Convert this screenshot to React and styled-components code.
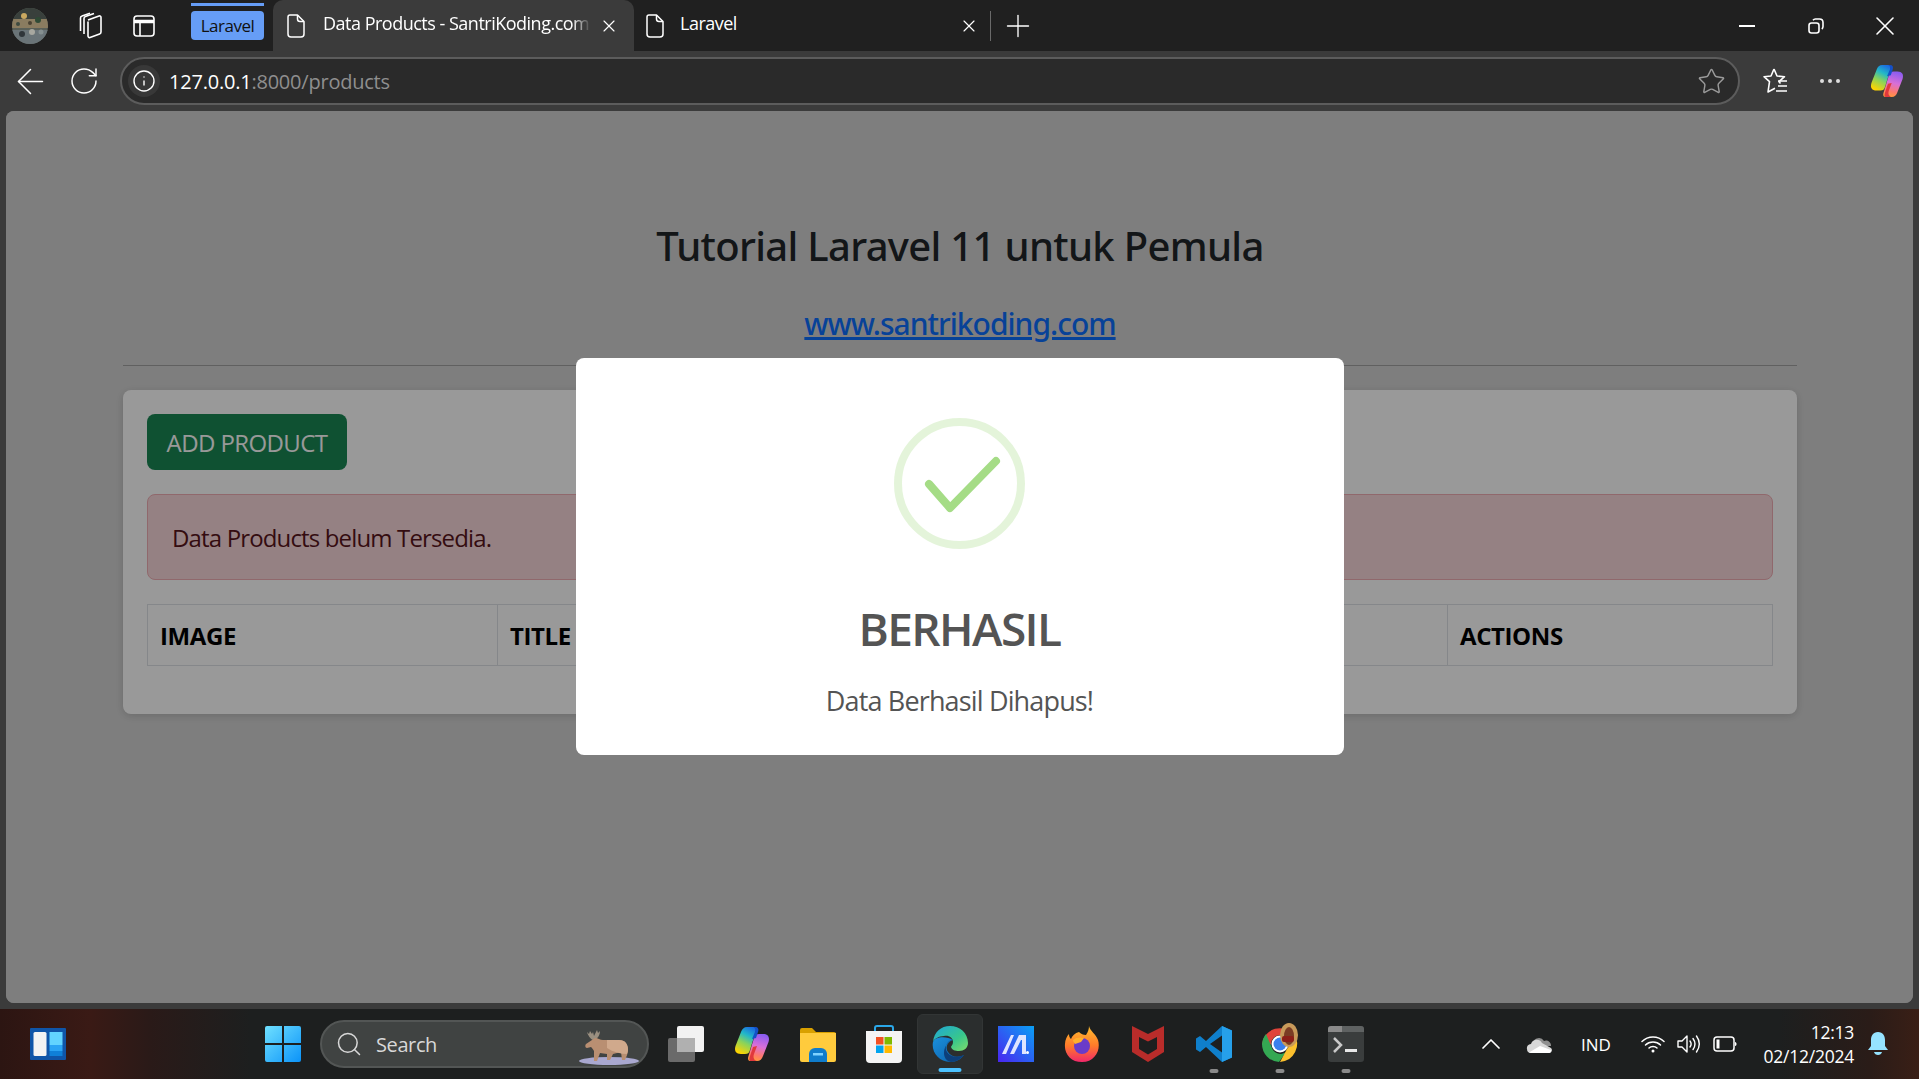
import React from 'react'
import styled, { createGlobalStyle } from 'styled-components'
import { ArrowLeft, RotateCw, Info, Star, X, Plus, ChevronUp, Search } from 'lucide-react'

const Global = createGlobalStyle`
  html, body { margin: 0; padding: 0; height: 100%; overflow: hidden; background: #202020; }
  * { box-sizing: border-box; }
  body { font-family: "Open Sans", "Noto Sans", sans-serif; }
`

const Screen = styled.div`
  width: 1919px;
  height: 1079px;
  display: flex;
  flex-direction: column;
`

const TitleBar = styled.div`
  height: 51px;
  background: #202020;
  display: flex;
  align-items: center;
  padding-left: 12px;
  color: #fff;
`

const Cell = styled.div`
  width: ${p => p.$w || 54}px;
  margin-left: ${p => p.$ml || 0}px;
  display: flex;
  align-items: center;
  justify-content: center;
  flex-shrink: 0;
  color: ${p => p.$color || '#fff'};
`

const GroupChip = styled.div`
  position: relative;
  width: 73px;
  height: 29px;
  margin-left: 20px;
  background: #669df6;
  border-radius: 4px;
  color: #111;
  font-size: 17px;
  letter-spacing: -0.5px;
  display: flex;
  align-items: center;
  justify-content: center;
  &::before {
    content: '';
    position: absolute;
    left: 0;
    right: 0;
    top: -8px;
    height: 3px;
    background: #669df6;
  }
`

const Tab = styled.div`
  align-self: stretch;
  width: ${p => p.$w}px;
  margin-left: ${p => p.$ml || 0}px;
  background: ${p => (p.$active ? '#3b3b3b' : 'transparent')};
  border-radius: 10px 10px 0 0;
  display: flex;
  align-items: center;
  padding-left: ${p => p.$pl}px;
`

const TabTitle = styled.div`
  margin-left: ${p => p.$ml}px;
  width: ${p => p.$w}px;
  font-size: 18px;
  letter-spacing: -0.5px;
  white-space: nowrap;
  overflow: hidden;
  margin-top: -5px;
  mask-image: ${p => (p.$fade ? 'linear-gradient(90deg, #000 93%, transparent)' : 'none')};
`

const TabClose = styled(Cell)`
  width: 20px;
  margin-left: ${p => p.$ml}px;
`

const Divider = styled.div`
  width: 1px;
  height: 30px;
  background: #6a6a6a;
  margin-left: 9px;
`

const WindowControls = styled.div`
  margin-left: auto;
  display: flex;
`

const Toolbar = styled.div`
  height: 60px;
  background: #3b3b3b;
  display: flex;
  align-items: center;
  padding-left: 3px;
  padding-right: 5px;
`

const AddressBar = styled.div`
  width: 1620px;
  height: 48px;
  margin-left: 9px;
  margin-right: 9px;
  background: #2a2a2a;
  border: 2px solid #5c5c5c;
  border-radius: 24px;
  display: flex;
  align-items: center;
  padding-left: 6px;
  font-size: 20px;
`

const InfoBadge = styled.div`
  width: 32px;
  height: 32px;
  border-radius: 50%;
  background: #383838;
  color: #fff;
  display: flex;
  align-items: center;
  justify-content: center;
`

const Url = styled.div`
  margin-left: 9px;
  color: #8f8f8f;
  letter-spacing: -0.22px;
  strong { color: #fff; font-weight: 400; }
`

const StarSlot = styled.div`
  margin-left: auto;
  margin-right: 12px;
  color: #9a9a9a;
  display: flex;
`

const Chrome = styled.div`
  flex: 1;
  background: #3b3b3b;
  padding: 0 6px 6px;
  display: flex;
  min-height: 0;
`

const Viewport = styled.div`
  position: relative;
  flex: 1;
  background: lightgray;
  border-radius: 8px;
  overflow: hidden;
  padding: 111px 116px 0 117px;
  color: #212529;
`

const Heading = styled.h3`
  margin: 0;
  text-align: center;
  font-family: "Noto Sans", "Open Sans", sans-serif;
  font-size: 40px;
  line-height: 48px;
  font-weight: 500;
  letter-spacing: -0.68px;
`

const SiteLink = styled.a`
  display: block;
  margin-top: 35px;
  text-align: center;
  font-family: "Noto Sans", "Open Sans", sans-serif;
  font-size: 30px;
  line-height: 38px;
  font-weight: 500;
  letter-spacing: -1px;
  color: #0d6efd;
  text-decoration: underline;
`

const Rule = styled.hr`
  margin: 22px 0 24px;
  border: 0;
  border-top: 1px solid #a0a0a0;
`

const Card = styled.div`
  background: #fff;
  border-radius: 8px;
  padding: 24px;
  box-shadow: 0 2px 8px rgba(0, 0, 0, 0.15);
`

const AddButton = styled.button`
  display: block;
  width: 200px;
  height: 56px;
  background: #198754;
  color: #fff;
  border: 0;
  border-radius: 8px;
  font-family: inherit;
  font-size: 24px;
  letter-spacing: -0.6px;
  padding: 1px 0 0;
`

const Alert = styled.div`
  margin-top: 24px;
  height: 86px;
  background: #f8d7da;
  border: 1px solid #f1aeb5;
  border-radius: 8px;
  color: #58151c;
  font-size: 24px;
  letter-spacing: -0.85px;
  display: flex;
  align-items: center;
  padding: 0 24px 0;
`

const HeaderRow = styled.div`
  margin-top: 24px;
  margin-bottom: 24px;
  display: grid;
  grid-template-columns: 349px 950px 1fr;
  border: 1px solid #dee2e6;
  height: 62px;
`

const HeaderCell = styled.div`
  display: flex;
  align-items: center;
  padding-left: 12px;
  font-size: 24px;
  font-weight: 700;
  letter-spacing: -0.4px;
  color: #000;
  & + & { border-left: 1px solid #dee2e6; }
`

const Backdrop = styled.div`
  position: absolute;
  inset: 0;
  padding-bottom: 1px;
  background: rgba(0, 0, 0, 0.4);
  display: flex;
  align-items: center;
  justify-content: center;
`

const Modal = styled.div`
  width: 768px;
  height: 397px;
  background: #fff;
  border-radius: 8px;
  display: flex;
  flex-direction: column;
  align-items: center;
  padding-top: 60px;
  color: #545454;
`

const ModalTitle = styled.h2`
  margin: 51px 0 0;
  font-size: 46px;
  line-height: 56px;
  font-weight: 600;
  letter-spacing: -1.6px;
`

const ModalText = styled.div`
  margin-top: 28px;
  font-size: 27px;
  line-height: 34px;
  letter-spacing: -0.85px;
`

const Taskbar = styled.div`
  height: 70px;
  display: flex;
  align-items: center;
  color: #fff;
  background: linear-gradient(90deg, #2c1512 0, #3a1a15 90px, #2a1a18 150px, #1d1f1f 250px, #1d1f1f 1780px, #2a1c18 1870px, #3a1f16 1919px);
`

const Widgets = styled(Cell)`
  width: 66px;
  margin-left: 15px;
`

const StartCell = styled(Cell)`
  width: 66px;
  margin-left: 169px;
`

const SearchBox = styled.div`
  position: relative;
  width: 329px;
  height: 48px;
  margin-left: 4px;
  margin-right: 4px;
  border-radius: 24px;
  background: #404342;
  border: 2px solid #535655;
  display: flex;
  align-items: center;
  padding-left: 13px;
  font-size: 20px;
  color: #d8d8d8;
  letter-spacing: -0.4px;
  flex-shrink: 0;
  span { margin-left: 13px; }
`

const MooseSlot = styled.div`
  position: absolute;
  right: 8px;
  top: 4px;
`

const AppCell = styled.div`
  position: relative;
  width: 66px;
  height: 60px;
  flex-shrink: 0;
  display: flex;
  align-items: center;
  justify-content: center;
  border-radius: 6px;
  background: ${p => (p.$active ? '#2b2e2e' : 'transparent')};
  border: ${p => (p.$active ? '1px solid #323535' : 'none')};
  &::after {
    content: '';
    display: ${p => (p.$open || p.$active ? 'block' : 'none')};
    position: absolute;
    bottom: 1px;
    left: 50%;
    transform: translateX(-50%);
    width: ${p => (p.$active ? 23 : 9)}px;
    height: 4px;
    border-radius: 2px;
    background: ${p => (p.$active ? '#4cc2ff' : '#8a8a8a')};
  }
`

const Tray = styled.div`
  margin-left: auto;
  padding-right: 17px;
  display: flex;
  align-items: center;
  height: 100%;
`

const TraySlot = styled.div`
  width: ${p => p.$w}px;
  display: flex;
  justify-content: center;
  align-items: center;
  font-size: 17px;
`

const Clock = styled.div`
  width: 96px;
  text-align: right;
  font-size: 17.5px;
  line-height: 24px;
  letter-spacing: -0.25px;
  margin-left: 15px;
`

const ThinX = () => <X size={24} strokeWidth={1.4} />

const DocIcon = () => (
  <svg width="18" height="24" viewBox="0 0 18 24" fill="none" stroke="#fff" strokeWidth="1.5" strokeLinejoin="round">
    <path d="M3 1h7.5L17 7.5V20a3 3 0 0 1-3 3H4a3 3 0 0 1-3-3V3a2 2 0 0 1 2-2z" />
    <path d="M10.5 1v4a2.5 2.5 0 0 0 2.5 2.5h4" />
  </svg>
)

const Avatar = () => (
  <svg width="36" height="36" viewBox="0 0 36 36">
    <circle cx="18" cy="18" r="18" fill="#5a6058" />
    <clipPath id="avatarClip"><circle cx="18" cy="18" r="18" /></clipPath>
    <g clipPath="url(#avatarClip)">
      <rect x="0" y="0" width="36" height="11" fill="#39403c" />
      <rect x="0" y="11" width="36" height="9" fill="#8a7c60" />
      <rect x="0" y="22" width="36" height="14" fill="#6a7478" />
      <circle cx="12" cy="8" r="3" fill="#c9a860" />
      <circle cx="26" cy="12" r="3" fill="#2f4a35" />
      <circle cx="20" cy="24" r="3" fill="#a8a8a0" />
      <circle cx="10" cy="26" r="3" fill="#30363a" />
      <circle cx="6" cy="16" r="2" fill="#3d4a40" />
      <circle cx="18" cy="15" r="2" fill="#4a4232" />
      <circle cx="29" cy="24" r="2.500" fill="#858f90" />
    </g>
  </svg>
)

const WorkspacesIcon = () => (
  <svg width="26" height="28" viewBox="0 0 26 28" fill="none" stroke="#fff" strokeWidth="1.6" strokeLinejoin="round">
    <path d="M11 8l11-4a1.5 1.5 0 0 1 2 1.4V20a2 2 0 0 1-1.4 1.9L13 25.5a1.5 1.5 0 0 1-2-1.4V9.4" />
    <path d="M7 22V6.5A2 2 0 0 1 8.4 4.6L17 1.5" />
    <path d="M3.5 19V6A2 2 0 0 1 5 4l8-2.8" />
  </svg>
)

const SidebarIcon = () => (
  <svg width="22" height="22" viewBox="0 0 22 22" fill="none" stroke="#fff" strokeWidth="1.6">
    <rect x="1" y="1" width="20" height="20" rx="3" />
    <path d="M1 6.500h20" strokeWidth="3.500" />
    <path d="M7 7v14" />
  </svg>
)

const RestoreIcon = () => (
  <svg width="16" height="16" viewBox="0 0 16 16" fill="none" stroke="#fff" strokeWidth="1.6">
    <rect x="1" y="5" width="10" height="10" rx="2.500" />
    <path d="M5 2.200c.6-.8 1.400-1.200 2.400-1.200h4.100c2 0 3.500 1.500 3.500 3.500v4.100c0 1-.4 1.800-1.200 2.400" />
  </svg>
)

const FavListIcon = () => (
  <svg width="26" height="28" viewBox="0 0 26 28" fill="none" stroke="#fff" strokeWidth="1.6" strokeLinejoin="round">
    <path d="M11 2l3 7 7.500.7-5.500 5 1.500 1.800M11 2L8 9l-7 .7 5.500 5L5 25l7-3.800" />
    <path d="M15 14h9M15 19h9M13 24h11" />
  </svg>
)

const DotsIcon = () => (
  <svg width="22" height="6" viewBox="0 0 22 6" fill="#ddd">
    <circle cx="3" cy="3" r="2" />
    <circle cx="11" cy="3" r="2" />
    <circle cx="19" cy="3" r="2" />
  </svg>
)

const CopilotIcon = ({ size = 36, id }) => (
  <svg width={size} height={size} viewBox="0 0 36 36">
    <defs>
      <linearGradient id={`${id}l`} x1="0.7" y1="0" x2="0.3" y2="1">
        <stop offset="0" stopColor="#1b6fe0" />
        <stop offset="0.3" stopColor="#22b8c8" />
        <stop offset="0.6" stopColor="#8ad35a" />
        <stop offset="1" stopColor="#ffd400" />
      </linearGradient>
      <linearGradient id={`${id}r`} x1="0.6" y1="0" x2="0.4" y2="1">
        <stop offset="0" stopColor="#8a5cf0" />
        <stop offset="0.45" stopColor="#d86fd8" />
        <stop offset="0.8" stopColor="#ff7a6a" />
        <stop offset="1" stopColor="#ff9a3c" />
      </linearGradient>
    </defs>
    <path d="M13 1h6c3 0 3.500 2 2.500 5L16 24c-1 3-2 4-5 4H7c-5 0-7-3-5.500-8L7 6c1-3 3-5 6-5z" fill={`url(#${id}l)`} />
    <path d="M23 35h-6c-3 0-3.500-2-2.500-5L20 12c1-3 2-4 5-4h4c5 0 7 3 5.500 8L29 30c-1 3-3 5-6 5z" fill={`url(#${id}r)`} />
    <path d="M17 1h4c3 0 4 2 3 5l-2 6-4 1 3-7c1-3 0-5-4-5z" fill="#1450c8" />
    <path d="M16 30l3-9 4-1-3 8c-1 3-.5 6 3 7h-6c-2 0-2-2-1-5z" fill="#e0383c" />
  </svg>
)

const WidgetsIcon = () => (
  <svg width="36" height="32" viewBox="0 0 36 32">
    <rect width="36" height="32" rx="1" fill="#0f55a8" />
    <rect x="3.500" y="4" width="13" height="24" rx="1.500" fill="#f3f3f3" />
    <rect x="19.500" y="4" width="13" height="13" fill="#62d4ff" />
    <rect x="19.500" y="17" width="13" height="6" fill="#2aa4f4" />
    <rect x="19.500" y="23" width="13" height="5" fill="#0f80d8" />
  </svg>
)

const WinIcon = () => (
  <svg width="36" height="36" viewBox="0 0 36 36">
    <defs>
      <linearGradient id="win" x1="0" y1="0" x2="1" y2="1">
        <stop offset="0" stopColor="#6fe0ff" />
        <stop offset="1" stopColor="#0b93f8" />
      </linearGradient>
    </defs>
    <path d="M0 2a2 2 0 0 1 2-2h15v17H0zM19 0h15a2 2 0 0 1 2 2v15H19zM0 19h17v17H2a2 2 0 0 1-2-2zM19 19h17v15a2 2 0 0 1-2 2H19z" fill="url(#win)" />
  </svg>
)

const Moose = () => (
  <svg width="62" height="40" viewBox="0 0 62 40">
    <ellipse cx="32" cy="35" rx="30" ry="4" fill="#a9a8d0" />
    <path d="M16 14c-3-1-5-5-6-8l2 2 1-3 2 3 1-2 1 4c1-2 2-4 3-6l1 3 2-2c0 4-2 7-5 9z" fill="#9a8f80" />
    <path d="M12 16l6-4c3 0 5 2 8 2h16c6 0 9 4 9 10 0 4-2 7-3 10h-3l-1-8-8 2-3 6h-3l0-6-7-1-3 8h-3l0-10c-1-2-2-3-3-4l-4 1c-2 0-2-3-1-4z" fill="#b98f72" />
    <path d="M30 14h12c6 0 9 4 9 10 0 2-1 3-1 4-6 0-14-2-20-6z" fill="#d0a98c" />
  </svg>
)

const TaskViewIcon = () => (
  <svg width="36" height="36" viewBox="0 0 36 36">
    <rect x="0" y="12" width="27" height="24" rx="2" fill="#6a6a6a" />
    <rect x="9" y="0" width="27" height="26" rx="2" fill="#f2f2f2" />
    <rect x="9" y="12" width="18" height="14" fill="#b0b0b0" />
  </svg>
)

const FolderIcon = () => (
  <svg width="36" height="36" viewBox="0 0 36 36">
    <path d="M0 4a2 2 0 0 1 2-2h10l4 4h18a2 2 0 0 1 2 2v4H0z" fill="#d9a000" />
    <path d="M0 7h36v27a2 2 0 0 1-2 2H2a2 2 0 0 1-2-2z" fill="#ffcb3d" />
    <path d="M9 36v-8a6 6 0 0 1 6-6h6a6 6 0 0 1 6 6v8z" fill="#0f7ccb" />
    <rect x="13" y="27" width="10" height="2.500" fill="#7fd2ff" />
  </svg>
)

const StoreIcon = () => (
  <svg width="36" height="38" viewBox="0 0 36 38">
    <path d="M9 8V3a2 2 0 0 1 2-2h14a2 2 0 0 1 2 2v5" fill="none" stroke="#2aa7e8" strokeWidth="2" />
    <path d="M0 6h36v28a4 4 0 0 1-4 4H4a4 4 0 0 1-4-4z" fill="#f4f4f4" />
    <rect x="10" y="12" width="7.500" height="7.500" fill="#f25022" />
    <rect x="18.500" y="12" width="7.500" height="7.500" fill="#7fba00" />
    <rect x="10" y="20.500" width="7.500" height="7.500" fill="#00a4ef" />
    <rect x="18.500" y="20.500" width="7.500" height="7.500" fill="#ffb900" />
  </svg>
)

const EdgeIcon = () => (
  <svg width="36" height="36" viewBox="0 0 36 36">
    <defs>
      <linearGradient id="edgeTop" x1="0" y1="0" x2="1" y2="1">
        <stop offset="0" stopColor="#1fa6d8" />
        <stop offset="0.6" stopColor="#38c78c" />
        <stop offset="1" stopColor="#7fdc6a" />
      </linearGradient>
      <linearGradient id="edgeLow" x1="0" y1="0" x2="1" y2="1">
        <stop offset="0" stopColor="#1a8fdc" />
        <stop offset="1" stopColor="#0c5fa8" />
      </linearGradient>
    </defs>
    <path d="M1 16C2 6 9 0 18 0c10 0 18 7 18 17 0 5-4 8-9 8-4 0-7-1-8-4 0-1 2-2 2-5 0-4-4-7-9-6-5 0-10 3-11 6z" fill="url(#edgeTop)" />
    <path d="M1 16c-2 10 6 20 17 20 7 0 11-3 14-7-6 3-13 2-16-3-3-4-1-10 5-12-6-4-18-4-20 2z" fill="url(#edgeLow)" />
    <path d="M15 26c3 5 10 6 17 3-3 4-8 7-13 7-5-1-7-5-7-9 0-7 5-12 9-14-6 2-9 8-6 13z" fill="#0d3f7a" />
  </svg>
)

const MaIcon = () => (
  <svg width="36" height="36" viewBox="0 0 36 36">
    <defs>
      <linearGradient id="ma" x1="0" y1="1" x2="1" y2="0">
        <stop offset="0" stopColor="#4a25f0" />
        <stop offset="1" stopColor="#0aa0f5" />
      </linearGradient>
    </defs>
    <rect width="36" height="36" fill="url(#ma)" />
    <path d="M4 28L13 9h3L8 28zM12 28L21 9h7v19h-4V14h-1l-7 14z" fill="#dfe4ff" />
    <circle cx="29.500" cy="26.500" r="1.500" fill="#fff" />
  </svg>
)

const FirefoxIcon = () => (
  <svg width="36" height="36" viewBox="0 0 36 36">
    <defs>
      <linearGradient id="ff" x1="0.5" y1="0" x2="0.5" y2="1">
        <stop offset="0" stopColor="#ffbd2e" />
        <stop offset="0.55" stopColor="#ff7a2a" />
        <stop offset="1" stopColor="#f0286a" />
      </linearGradient>
    </defs>
    <path d="M25 0c1 5 7 8 9 14 3 10-3 22-16 22C7 36 0 28 1 18c0-4 2-8 4-10 0 3 1 4 2 5 1-3 4-6 8-7 2 2 4 3 7 3 2-3 3-6 3-9z" fill="url(#ff)" />
    <circle cx="18" cy="20" r="8" fill="#6a3bc8" />
    <path d="M9 14c3-3 8-3 11-2l-3 4-6 2c-1-1-2-3-2-4z" fill="#ffb02e" />
  </svg>
)

const McAfeeIcon = () => (
  <svg width="32" height="36" viewBox="0 0 32 36">
    <path d="M0 0l16 8L32 0v26L16 36 0 26z" fill="#b92c2a" />
    <path d="M7 11l9 4.500 9-4.500v12l-9 5.500L7 23z" fill="#1d1f1f" />
  </svg>
)

const VscodeIcon = () => (
  <svg width="36" height="36" viewBox="0 0 36 36">
    <path d="M26 0l10 4.500v27L26 36 10 21l-6 5-4-2.500v-11L4 10l6 5z" fill="#0f7fcb" />
    <path d="M26 0l10 4.500v27L26 36z" fill="#26a0ea" />
    <path d="M26 9.500L14 18l12 8.500z" fill="#1d1f1f" />
    <path d="M26 9.500V26.500L30 30V6z" fill="#26a0ea" />
  </svg>
)

const ChromeIcon = () => (
  <svg width="42" height="42" viewBox="0 0 42 42">
    <path d="M3 18a18 18 0 0 1 32-9H21a9 9 0 0 0-9 9l-4 4z" fill="#e0433a" transform="translate(0 3)" />
    <path d="M3 21a18 18 0 0 0 17 18l7-10a9 9 0 0 1-14-4L7 11a18 18 0 0 0-4 10z" fill="#34a853" />
    <path d="M21 39a18 18 0 0 0 14-28H21a9 9 0 0 1 7 15z" fill="#fbc02d" />
    <circle cx="21" cy="21" r="8.500" fill="#fff" />
    <circle cx="21" cy="21" r="6.500" fill="#3a80ee" />
    <ellipse cx="30" cy="12" rx="9" ry="12" fill="#c89a5a" />
    <ellipse cx="30" cy="13" rx="5" ry="9" fill="#7a3c24" />
    <rect x="23" y="13" width="12" height="6" rx="2" fill="#8c1f18" />
  </svg>
)

const TerminalIcon = () => (
  <svg width="36" height="36" viewBox="0 0 36 36">
    <rect width="36" height="36" rx="3" fill="#3a3d3d" />
    <path d="M0 3a3 3 0 0 1 3-3h11v6H0z" fill="#8a8a8a" />
    <path d="M14 0h19a3 3 0 0 1 3 3v3H14z" fill="#5f6262" />
    <path d="M6 12l7 7-7 7" fill="none" stroke="#c9c9c9" strokeWidth="2.500" />
    <rect x="17" y="23" width="12" height="3" fill="#e8e8e8" />
  </svg>
)

const CloudIcon = () => (
  <svg width="26" height="18" viewBox="0 0 26 18">
    <path d="M7 8a6 6 0 0 1 11-2 5 5 0 0 1 7 5H8z" fill="#8f8f8f" />
    <path d="M1 14a4 4 0 0 1 4-5 6 6 0 0 1 11-1l9 5a3 3 0 0 1-1 5H5a4 4 0 0 1-4-4z" fill="#d8d8d8" />
    <path d="M3 17.500L14 11l11 4c0 2-1 3-2 3H5z" fill="#fff" />
  </svg>
)

const WifiIcon = () => (
  <svg width="24" height="18" viewBox="0 0 24 18" fill="none" stroke="#fff" strokeWidth="1.5" strokeLinecap="round">
    <path d="M1 6.500c6-6 16-6 22 0" />
    <path d="M4.500 10c4-4 11-4 15 0" />
    <path d="M8 13c2-2 6-2 8 0" />
    <circle cx="12" cy="16" r="1.500" fill="#fff" stroke="none" />
  </svg>
)

const VolumeIcon = () => (
  <svg width="24" height="20" viewBox="0 0 24 20" fill="none" stroke="#fff" strokeWidth="1.4" strokeLinejoin="round" strokeLinecap="round">
    <path d="M1 7v6h4l5 5V2L5 7z" />
    <path d="M13 7c1.500 2 1.500 4 0 6" />
    <path d="M16 4.500c2.500 3.500 2.500 7.500 0 11" />
    <path d="M19.500 2c3.500 5 3.500 11 0 16" />
  </svg>
)

const BatteryIcon = () => (
  <svg width="24" height="16" viewBox="0 0 24 16" fill="none" stroke="#fff" strokeWidth="1.5">
    <rect x="1" y="1" width="20" height="14" rx="3" />
    <rect x="3.500" y="3.500" width="3" height="9" fill="#fff" stroke="none" />
    <path d="M22 6c1 0 1.500 1 1.500 2s-.5 2-1.500 2" fill="#fff" stroke="none" />
  </svg>
)

const BellIcon = () => (
  <svg width="20" height="24" viewBox="0 0 20 24" fill="#96e3ff">
    <path d="M10 0c5 0 7 4 7 8v6l3 4H0l3-4V8c0-4 2-8 7-8z" />
    <path d="M6 20h8c-.5 2-2 3-4 3s-3.500-1-4-3z" />
  </svg>
)

const SuccessIcon = () => (
  <svg width="131" height="131" viewBox="0 0 131 131" fill="none">
    <circle cx="65.500" cy="65.500" r="61.500" stroke="#a5dc86" strokeOpacity="0.3" strokeWidth="8" />
    <path d="M35 66L56 90l46-47" stroke="#a5dc86" strokeWidth="8" strokeLinecap="round" strokeLinejoin="round" />
  </svg>
)

const apps = [
  { key: 'task', Icon: TaskViewIcon },
  { key: 'copilot', Icon: () => <CopilotIcon id="cpt" /> },
  { key: 'folder', Icon: FolderIcon },
  { key: 'store', Icon: StoreIcon },
  { key: 'edge', Icon: EdgeIcon, active: true },
  { key: 'ma', Icon: MaIcon },
  { key: 'firefox', Icon: FirefoxIcon },
  { key: 'mcafee', Icon: McAfeeIcon },
  { key: 'vscode', Icon: VscodeIcon, open: true },
  { key: 'chrome', Icon: ChromeIcon, open: true },
  { key: 'terminal', Icon: TerminalIcon, open: true },
]

export default function App() {
  return (
    <Screen>
      <Global />
      <TitleBar>
        <Avatar />
        <Cell $ml={15}><WorkspacesIcon /></Cell>
        <Cell><SidebarIcon /></Cell>
        <GroupChip>Laravel</GroupChip>
        <Tab $active $w={361} $ml={9} $pl={14}>
          <DocIcon />
          <TabTitle $ml={18} $w={268} $fade>Data Products - SantriKoding.com</TabTitle>
          <TabClose $ml={8}><ThinX /></TabClose>
        </Tab>
        <Tab $w={347} $pl={12}>
          <DocIcon />
          <TabTitle $ml={16} $w={279}>Laravel</TabTitle>
          <TabClose $ml={0}><ThinX /></TabClose>
        </Tab>
        <Divider />
        <Cell $w={54}><Plus size={36} strokeWidth={0.9} /></Cell>
        <WindowControls>
          <Cell $w={69}>
            <svg width="16" height="2"><rect width="16" height="2" fill="#fff" /></svg>
          </Cell>
          <Cell $w={69}><RestoreIcon /></Cell>
          <Cell $w={69}><X size={32} strokeWidth={1.2} /></Cell>
        </WindowControls>
      </TitleBar>

      <Toolbar>
        <Cell><ArrowLeft size={41} strokeWidth={0.9} /></Cell>
        <Cell><RotateCw size={32} strokeWidth={1.1} /></Cell>
        <AddressBar>
          <InfoBadge><Info size={24} strokeWidth={1.4} /></InfoBadge>
          <Url><strong>127.0.0.1</strong>:8000/products</Url>
          <StarSlot><Star size={29} strokeWidth={1.2} /></StarSlot>
        </AddressBar>
        <Cell><FavListIcon /></Cell>
        <Cell><DotsIcon /></Cell>
        <Cell $ml={3}><CopilotIcon size={34} id="cpb" /></Cell>
      </Toolbar>

      <Chrome>
        <Viewport>
          <Heading>Tutorial Laravel 11 untuk Pemula</Heading>
          <SiteLink href="#">www.santrikoding.com</SiteLink>
          <Rule />
          <Card>
            <AddButton>ADD PRODUCT</AddButton>
            <Alert>Data Products belum Tersedia.</Alert>
            <HeaderRow>
              <HeaderCell>IMAGE</HeaderCell>
              <HeaderCell>TITLE</HeaderCell>
              <HeaderCell>ACTIONS</HeaderCell>
            </HeaderRow>
          </Card>
          <Backdrop>
            <Modal>
              <SuccessIcon />
              <ModalTitle>BERHASIL</ModalTitle>
              <ModalText>Data Berhasil Dihapus!</ModalText>
            </Modal>
          </Backdrop>
        </Viewport>
      </Chrome>

      <Taskbar>
        <Widgets><WidgetsIcon /></Widgets>
        <StartCell><WinIcon /></StartCell>
        <SearchBox>
          <Search size={28} strokeWidth={1.3} />
          <span>Search</span>
          <MooseSlot><Moose /></MooseSlot>
        </SearchBox>
        {apps.map(({ key, Icon, active, open }) => (
          <AppCell key={key} $active={active} $open={open}>
            <Icon />
          </AppCell>
        ))}
        <Tray>
          <TraySlot $w={60}><ChevronUp size={32} strokeWidth={1.3} /></TraySlot>
          <TraySlot $w={36}><CloudIcon /></TraySlot>
          <TraySlot $w={78}>IND</TraySlot>
          <TraySlot $w={36}><WifiIcon /></TraySlot>
          <TraySlot $w={36}><VolumeIcon /></TraySlot>
          <TraySlot $w={36}><BatteryIcon /></TraySlot>
          <Clock>12:13<br />02/12/2024</Clock>
          <TraySlot $w={48}><BellIcon /></TraySlot>
        </Tray>
      </Taskbar>
    </Screen>
  )
}
